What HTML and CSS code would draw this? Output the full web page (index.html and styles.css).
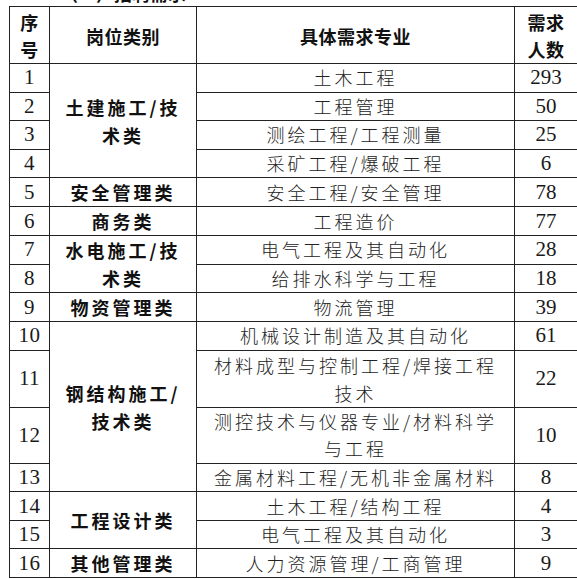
FILE: index.html
```html
<!DOCTYPE html>
<html lang="zh-CN">
<head>
<meta charset="utf-8">
<title>招聘需求</title>
<link rel="stylesheet" href="styles.css">
</head>
<body>
<div class="page">
  <h2 class="caption">（一）招聘需求</h2>
  <table class="grid">
    <colgroup>
      <col class="c1"><col class="c2"><col class="c3"><col class="c4">
    </colgroup>
    <thead>
      <tr class="head">
        <th>序<br>号</th>
        <th>岗位类别</th>
        <th>具体需求专业</th>
        <th>需求<br>人数</th>
      </tr>
    </thead>
    <tbody>
      <tr class="r"><td class="no">1</td><td class="cat" rowspan="4">土建施工/技<br>术类</td><td class="major">土木工程</td><td class="num">293</td></tr>
      <tr class="r"><td class="no">2</td><td class="major">工程管理</td><td class="num">50</td></tr>
      <tr class="r"><td class="no">3</td><td class="major">测绘工程/工程测量</td><td class="num">25</td></tr>
      <tr class="r"><td class="no">4</td><td class="major">采矿工程/爆破工程</td><td class="num">6</td></tr>
      <tr class="r"><td class="no">5</td><td class="cat">安全管理类</td><td class="major">安全工程/安全管理</td><td class="num">78</td></tr>
      <tr class="r"><td class="no">6</td><td class="cat">商务类</td><td class="major">工程造价</td><td class="num">77</td></tr>
      <tr class="r"><td class="no">7</td><td class="cat" rowspan="2">水电施工/技<br>术类</td><td class="major">电气工程及其自动化</td><td class="num">28</td></tr>
      <tr class="r"><td class="no">8</td><td class="major">给排水科学与工程</td><td class="num">18</td></tr>
      <tr class="r"><td class="no">9</td><td class="cat">物资管理类</td><td class="major">物流管理</td><td class="num">39</td></tr>
      <tr class="r"><td class="no">10</td><td class="cat" rowspan="4">钢结构施工/<br>技术类</td><td class="major">机械设计制造及其自动化</td><td class="num">61</td></tr>
      <tr class="rr"><td class="no">11</td><td class="major two">材料成型与控制工程/焊接工程<br>技术</td><td class="num">22</td></tr>
      <tr class="rr"><td class="no">12</td><td class="major two tight">测控技术与仪器专业/材料科学<br>与工程</td><td class="num">10</td></tr>
      <tr class="r"><td class="no">13</td><td class="major">金属材料工程/无机非金属材料</td><td class="num">8</td></tr>
      <tr class="r"><td class="no">14</td><td class="cat" rowspan="2">工程设计类</td><td class="major">土木工程/结构工程</td><td class="num">4</td></tr>
      <tr class="r"><td class="no">15</td><td class="major">电气工程及其自动化</td><td class="num">3</td></tr>
      <tr class="r"><td class="no">16</td><td class="cat">其他管理类</td><td class="major">人力资源管理/工商管理</td><td class="num">9</td></tr>
    </tbody>
  </table>
</div>
</body>
</html>
```

FILE: styles.css
```css
html, body {
  margin: 0;
  padding: 0;
  background: #ffffff;
}

body {
  font-family: "Noto Sans CJK SC", "Noto Sans", sans-serif;
  color: #111111;
  overflow: hidden;
}

.page {
  padding-left: 9px;
}

.caption {
  margin: -16px 0 0 51px;
  font-size: 18px;
  line-height: 18px;
  font-weight: 700;
  color: #111111;
  height: 18px;
}

.grid {
  margin-top: 4px;
  width: 568px;
  table-layout: fixed;
  border-collapse: collapse;
  border: 1px solid #222222;
}

.c1 { width: 40px; }
.c2 { width: 147px; }
.c3 { width: 318px; }
.c4 { width: 63px; }

.grid th,
.grid td {
  border: 1px solid #222222;
  padding: 0;
  text-align: center;
  vertical-align: middle;
  overflow: visible;
  white-space: nowrap;
}

.head {
  height: 56px;
}

.head th {
  font-size: 18px;
  line-height: 27px;
  font-weight: 700;
  letter-spacing: 0.5px;
  padding-top: 2px;
  color: #111111;
}

.r {
  height: 28.5px;
}

.rr {
  height: 56.4px;
}

.no,
.num {
  font-family: "Liberation Serif", "Times New Roman", serif;
  font-size: 21px;
  line-height: 25px;
  padding-top: 3px;
  color: #1a1a1a;
}

.no {
  letter-spacing: 0.5px;
}

.cat {
  font-size: 18px;
  font-weight: 700;
  letter-spacing: 3px;
  line-height: 28px;
  padding-top: 3px;
  padding-left: 3px;
  color: #111111;
}

.major {
  font-size: 18px;
  font-weight: 300;
  letter-spacing: 3px;
  line-height: 25px;
  padding-top: 3px;
  padding-left: 3px;
  color: #222222;
}

.major.two {
  line-height: 28px;
  padding-top: 0;
}

.major.tight {
  line-height: 27px;
}
```
